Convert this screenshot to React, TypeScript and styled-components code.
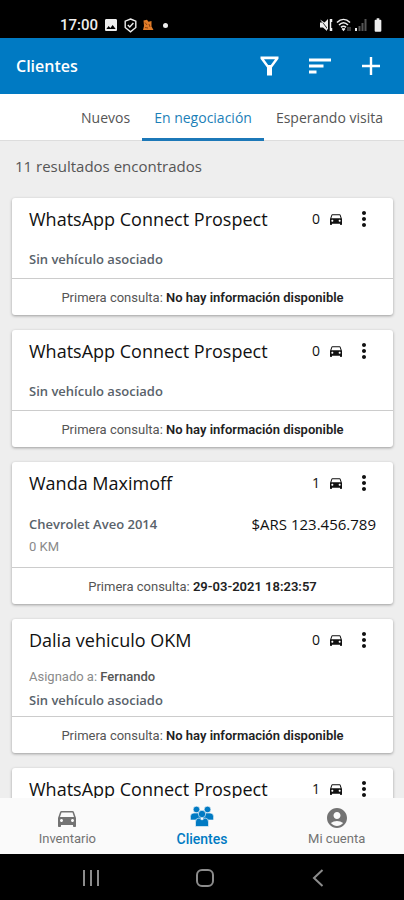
import React from "react";
import styled, { createGlobalStyle } from "styled-components";
import {
  MdMoreVert,
  MdDirectionsCar,
  MdAccountCircle,
  MdImage,
  MdBatteryFull,
} from "react-icons/md";

const GlobalStyle = createGlobalStyle`
  * { box-sizing: border-box; }
  html, body, #root { height: 100%; }
  body {
    margin: 0;
    background: #eeeeee;
    color: #111111;
    font-family: "Open Sans", "Noto Sans", sans-serif;
  }
  button { font: inherit; color: inherit; background: none; border: 0; padding: 0; cursor: pointer; }
  svg { display: block; }
  h1, h2, p { margin: 0; }
`;

const Screen = styled.div`
  display: flex;
  flex-direction: column;
  height: 100vh;
  overflow: hidden;
`;

const StatusBar = styled.div`
  display: flex;
  flex: none;
  justify-content: space-between;
  align-items: center;
  height: 38px;
  padding: 12px 18px 0 60px;
  background: #000000;
  color: #eeeeee;
`;

const StatusGroup = styled.div<{ $gap: number }>`
  display: flex;
  align-items: center;
  gap: ${(p) => p.$gap}px;
`;

const Clock = styled.span`
  font: 500 15px/20px Roboto, sans-serif;
`;

const Dot = styled.span`
  width: 5px;
  height: 5px;
  margin-left: 4px;
  border-radius: 50%;
  background: currentColor;
`;

const AppBar = styled.header`
  display: flex;
  flex: none;
  align-items: center;
  justify-content: space-between;
  height: 56px;
  padding: 0 21px 0 16px;
  background: #007ac3;
  color: #ffffff;
`;

const AppTitle = styled.h1`
  font-size: 16px;
  line-height: 24px;
  font-weight: 600;
`;

const Actions = styled.div`
  display: flex;
  gap: 27px;
`;

const IconButton = styled.button`
  display: grid;
  place-items: center;
  width: 24px;
  height: 24px;
`;

const Tabs = styled.nav`
  display: flex;
  flex: none;
  justify-content: flex-end;
  height: 47px;
  padding-right: 9px;
  background: #ffffff;
  border-bottom: 1px solid #dddddd;
`;

const Tab = styled.button<{ $active?: boolean }>`
  height: 47px;
  padding: 4px 12px 0;
  font-size: 14px;
  line-height: 20px;
  color: ${(p) => (p.$active ? "#1c7fb8" : "#555555")};
  border-bottom: 3px solid ${(p) => (p.$active ? "#1c78b8" : "transparent")};
`;

const List = styled.main`
  display: flex;
  flex: 1;
  flex-direction: column;
  gap: 15px;
  min-height: 0;
  padding: 14px 11px 0 12px;
  overflow-y: auto;
  scrollbar-width: none;
`;

const Count = styled.p`
  flex: none;
  height: 28px;
  padding-left: 3px;
  font-size: 15px;
  line-height: 22px;
  color: #555555;
`;

const Card = styled.article`
  flex: none;
  background: #ffffff;
  border-radius: 3px;
  box-shadow: 0 1px 3px rgba(0, 0, 0, 0.35);
`;

const CardHead = styled.div`
  display: flex;
  align-items: center;
  height: 42px;
  padding: 0 17px;
`;

const Name = styled.h2`
  flex: 1;
  font-size: 18px;
  line-height: 24px;
  font-weight: 500;
`;

const Vehicles = styled.span`
  display: flex;
  align-items: center;
  gap: 8px;
  margin-right: 8px;
  font-size: 14px;
  line-height: 20px;
  font-weight: 500;
`;

const CardBody = styled.div<{ $pad: number }>`
  display: grid;
  gap: 5px;
  padding: ${(p) => p.$pad}px 17px;
  font-size: 13px;
  line-height: 18px;
`;

const VehicleRow = styled.div`
  display: flex;
  justify-content: space-between;
`;

const Vehicle = styled.span`
  font-weight: 600;
  color: #59626a;
`;

const Price = styled.span`
  font-size: 15px;
  font-weight: 500;
`;

const Detail = styled.p`
  font-family: Roboto, sans-serif;
  color: #8a8a8a;
`;

const Owner = styled.strong`
  font-weight: 500;
  color: #555555;
`;

const CardFoot = styled.p`
  height: 37px;
  padding-top: 1px;
  border-top: 1px solid #cccccc;
  font: 400 13px/36px Roboto, sans-serif;
  color: #555555;
  text-align: center;

  strong { font-weight: 600; color: #222222; }
`;

const BottomNav = styled.nav`
  display: grid;
  flex: none;
  grid-template-columns: repeat(3, 1fr);
  height: 56px;
  background: #fafafa;
`;

const NavItem = styled.button<{ $active?: boolean }>`
  display: flex;
  flex-direction: column;
  align-items: center;
  justify-content: flex-end;
  gap: ${(p) => (p.$active ? 3 : 0)}px;
  padding-bottom: 6px;
  font: ${(p) => (p.$active ? "500 14px/18px" : "400 13px/18px")} Roboto, sans-serif;
  color: ${(p) => (p.$active ? "#007ac3" : "#737373")};
`;

const SystemNav = styled.div`
  display: flex;
  flex: none;
  align-items: center;
  justify-content: space-between;
  height: 46px;
  padding: 2px 74px 0 79px;
  background: #000000;
  color: #8c8c8c;
`;

const ShieldIcon = () => (
  <svg width="13" height="15" viewBox="0 0 13 15" fill="none" stroke="currentColor" strokeWidth="1.4">
    <path d="M6.5 1 11.8 3.2V9.5L6.5 13.8 1.2 9.5V3.2Z" />
    <path d="m3.8 7 2 2 3.6-4" />
  </svg>
);

const AppNoticeIcon = () => (
  <svg width="12" height="12" viewBox="0 0 12 12">
    <path d="M1.500 1.500 5 .8l1.500 2L9.500 2v5.500l2 3.500H1l1-4Z" fill="#e07b28" />
    <path d="m3 3.500 2 2.500M7 5l1 3M3 8.500l3 .5" stroke="#8a4310" />
  </svg>
);

const MuteIcon = () => (
  <svg width="14" height="14" viewBox="0 0 14 14" fill="currentColor">
    <path d="M1 1.500 9 12V1L5.500 4.500ZM1 4.500h3l4 5V13L4 9.500H1Z" />
    <path d="M11.500 1v12M12.500 1v3M12.500 10v3" stroke="currentColor" strokeWidth="1.5" />
  </svg>
);

const WifiIcon = () => (
  <svg width="16" height="14" viewBox="0 0 16 14" fill="none" stroke="currentColor" strokeWidth="1.6">
    <path d="M1 4.5c4-4 9-4 13 0M3 7c3-3 6-3 9 0M5 9.3c2-1.7 3-1.7 5 0" />
    <path d="m6.2 10.5 1.3 1.5 1.3-1.5" fill="currentColor" />
    <path d="M12 9v4m2-4v4" stroke="#777" strokeWidth="1" />
  </svg>
);

const SignalIcon = () => (
  <svg width="12" height="14" viewBox="0 0 12 14" strokeWidth="2">
    <path d="M1 10v3" stroke="currentColor" />
    <path d="M4.5 8v5M7.5 5v8M10.5 1v12" stroke="#555" />
  </svg>
);

const FunnelIcon = () => (
  <svg width="19" height="20" viewBox="0 0 19 20" fill="currentColor" fillRule="evenodd">
    <path d="M.5.500h18v2.300L12 11.500v8H7v-8L.5 2.800ZM4 3.200 8.200 9h2.600L15 3.200Z" />
  </svg>
);

const SortIcon = () => (
  <svg width="22" height="16" viewBox="0 0 22 16" fill="currentColor">
    <path d="M0 .500h22v3H0ZM0 6.500h14.500v3H0ZM0 12.500h7.500v3H0Z" />
  </svg>
);

const PlusIcon = () => (
  <svg width="18" height="18" viewBox="0 0 18 18" stroke="currentColor" strokeWidth="2.400">
    <path d="M9 0v18M0 9h18" />
  </svg>
);

const PeopleIcon = () => (
  <svg width="24" height="21" viewBox="0 0 24 21" fill="currentColor" stroke="#fafafa" strokeWidth=".6">
    <circle cx="6.500" cy="3.500" r="3.300" />
    <circle cx="17.500" cy="3.500" r="3.300" />
    <path d="M.4 14V10.500Q.4 7 4 7h4q3 0 3 3v4ZM23.600 14v-3.500Q23.600 7 20 7h-4q-3 0-3 3v4Z" />
    <circle cx="12" cy="8" r="3.700" />
    <path d="M5.500 20.500V16q0-4 3.500-4l3 2 3-2q3.500 0 3.500 4v4.500Z" />
  </svg>
);

const RecentsIcon = () => (
  <svg width="18" height="18" viewBox="0 0 18 18" stroke="currentColor" strokeWidth="2">
    <path d="M2 1v16M9 1v16M16 1v16" />
  </svg>
);

const HomeIcon = () => (
  <svg width="20" height="18" viewBox="0 0 20 18" fill="none" stroke="currentColor" strokeWidth="2">
    <rect x="2" y="1" width="16" height="16" rx="5" />
  </svg>
);

const BackIcon = () => (
  <svg width="12" height="18" viewBox="0 0 12 18" fill="none" stroke="currentColor" strokeWidth="2">
    <path d="m10.500 1-8.500 8 8.500 8" />
  </svg>
);

type Client = {
  name: string;
  count: number;
  vehicle: string;
  price?: string;
  km?: string;
  owner?: string;
  first: string;
  pad: number;
};

const NO_VEHICLE = "Sin vehículo asociado";
const NO_INFO = "No hay información disponible";

const clients: Client[] = [
  { name: "WhatsApp Connect Prospect", count: 0, vehicle: NO_VEHICLE, first: NO_INFO, pad: 10 },
  { name: "WhatsApp Connect Prospect", count: 0, vehicle: NO_VEHICLE, first: NO_INFO, pad: 10 },
  {
    name: "Wanda Maximoff",
    count: 1,
    vehicle: "Chevrolet Aveo 2014",
    price: "$ARS 123.456.789",
    km: "0 KM",
    first: "29-03-2021 18:23:57",
    pad: 11,
  },
  { name: "Dalia vehiculo OKM", count: 0, vehicle: NO_VEHICLE, owner: "Fernando", first: NO_INFO, pad: 7 },
  { name: "WhatsApp Connect Prospect", count: 1, vehicle: NO_VEHICLE, first: NO_INFO, pad: 10 },
];

const ClientCard = ({ client }: { client: Client }) => (
  <Card>
    <CardHead>
      <Name>{client.name}</Name>
      <Vehicles>
        {client.count}
        <MdDirectionsCar size={16} />
      </Vehicles>
      <IconButton aria-label="Más opciones">
        <MdMoreVert size={24} />
      </IconButton>
    </CardHead>
    <CardBody $pad={client.pad}>
      {client.owner && (
        <Detail>
          Asignado a: <Owner>{client.owner}</Owner>
        </Detail>
      )}
      <VehicleRow>
        <Vehicle>{client.vehicle}</Vehicle>
        {client.price && <Price>{client.price}</Price>}
      </VehicleRow>
      {client.km && <Detail>{client.km}</Detail>}
    </CardBody>
    <CardFoot>
      Primera consulta: <strong>{client.first}</strong>
    </CardFoot>
  </Card>
);

export default function App() {
  return (
    <Screen>
      <GlobalStyle />
      <StatusBar>
        <StatusGroup $gap={5}>
          <Clock>17:00</Clock>
          <MdImage size={16} />
          <ShieldIcon />
          <AppNoticeIcon />
          <Dot />
        </StatusGroup>
        <StatusGroup $gap={3}>
          <MuteIcon />
          <WifiIcon />
          <SignalIcon />
          <MdBatteryFull size={16} />
        </StatusGroup>
      </StatusBar>
      <AppBar>
        <AppTitle>Clientes</AppTitle>
        <Actions>
          <IconButton aria-label="Filtrar"><FunnelIcon /></IconButton>
          <IconButton aria-label="Ordenar"><SortIcon /></IconButton>
          <IconButton aria-label="Agregar"><PlusIcon /></IconButton>
        </Actions>
      </AppBar>
      <Tabs>
        <Tab>Nuevos</Tab>
        <Tab $active>En negociación</Tab>
        <Tab>Esperando visita</Tab>
      </Tabs>
      <List>
        <Count>11 resultados encontrados</Count>
        {clients.map((client, i) => (
          <ClientCard key={i} client={client} />
        ))}
      </List>
      <BottomNav>
        <NavItem><MdDirectionsCar size={24} />Inventario</NavItem>
        <NavItem $active><PeopleIcon />Clientes</NavItem>
        <NavItem><MdAccountCircle size={24} />Mi cuenta</NavItem>
      </BottomNav>
      <SystemNav>
        <IconButton aria-label="Recientes"><RecentsIcon /></IconButton>
        <IconButton aria-label="Inicio"><HomeIcon /></IconButton>
        <IconButton aria-label="Atrás"><BackIcon /></IconButton>
      </SystemNav>
    </Screen>
  );
}
